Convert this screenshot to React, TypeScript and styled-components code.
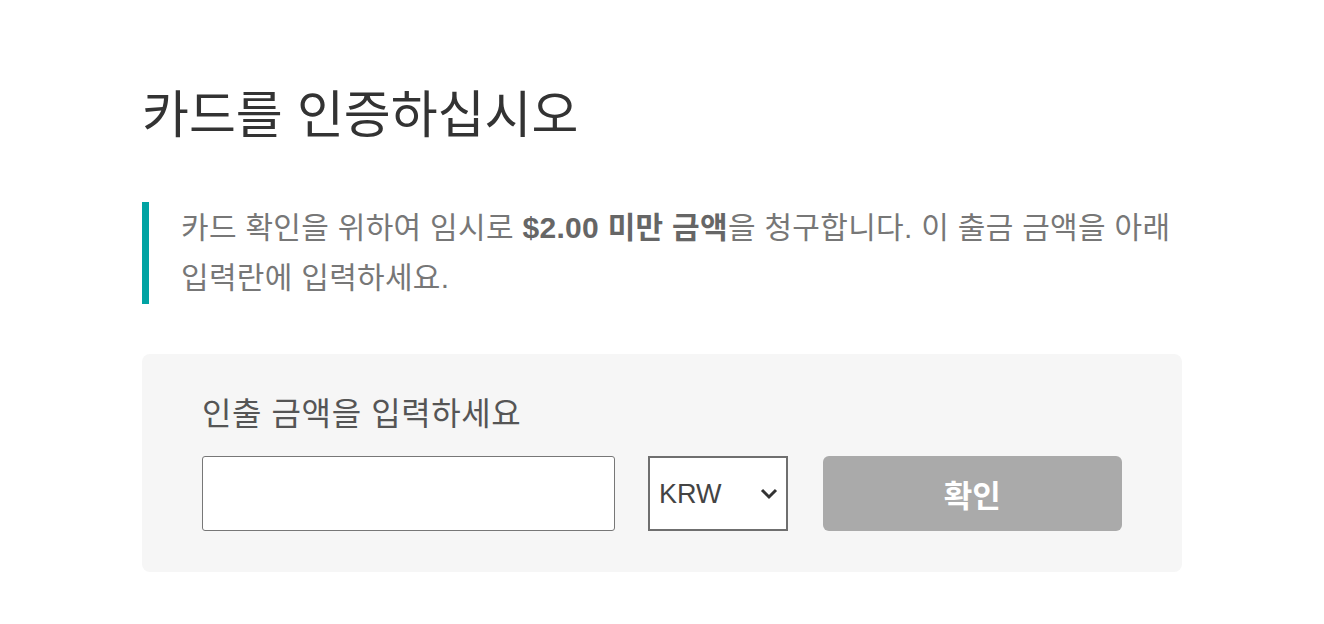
import React from 'react';
import styled, { createGlobalStyle } from 'styled-components';

const GlobalStyle = createGlobalStyle`
  body {
    margin: 0;
    background: #fff;
    font-family: 'Liberation Sans', 'Noto Sans CJK KR', sans-serif;
  }
`;

const Container = styled.div`
  max-width: 1040px;
  margin: 0 auto;
  padding-top: 80px;
`;

const Title = styled.h1`
  font-size: 51px;
  font-weight: 400;
  color: #333;
  margin: 0 0 50px;
  line-height: 72px;
`;

const Notice = styled.blockquote`
  margin: 0 0 50px;
  padding: 1px 0 1px 32px;
  border-left: 7px solid #00a3a3;
  font-size: 30px;
  letter-spacing: 0.3px;
  line-height: 50px;
  color: #777;
  word-break: keep-all;

  strong {
    color: #666;
    font-weight: 700;
  }
`;

const Panel = styled.div`
  background: #f6f6f6;
  border-radius: 8px;
  padding: 40px 60px 41px;
`;

const Label = styled.label`
  display: block;
  font-size: 32px;
  letter-spacing: 0.6px;
  color: #555;
  line-height: 40px;
  margin-bottom: 22px;
`;

const Row = styled.div`
  display: flex;
  align-items: stretch;
  height: 75px;
`;

const AmountInput = styled.input`
  box-sizing: border-box;
  width: 414px;
  border: 1px solid #777;
  border-radius: 3px;
  background: #fff;
  font-size: 26px;
  padding: 0 12px;
`;

const SelectWrap = styled.div`
  position: relative;
  margin-left: 33px;
  width: 140px;
`;

const CurrencySelect = styled.select`
  box-sizing: border-box;
  width: 100%;
  height: 100%;
  appearance: none;
  border: 2px solid #6f6f6f;
  border-radius: 0;
  background: #fff;
  font-family: 'Liberation Sans', Arial, sans-serif;
  font-size: 27px;
  color: #444;
  padding: 0 0 0 9px;
`;

const Chevron = styled.svg`
  position: absolute;
  right: 10px;
  top: 50%;
  transform: translateY(-50%);
  pointer-events: none;
`;

const SubmitButton = styled.button`
  margin-left: 35px;
  width: 300px;
  border: none;
  border-radius: 6px;
  background: #aaa;
  color: #fff;
  font-family: inherit;
  font-size: 31px;
  font-weight: 700;
`;

const App: React.FC = () => {
  return (
    <>
      <GlobalStyle />
      <Container>
        <Title>카드를 인증하십시오</Title>
        <Notice>
          카드 확인을 위하여 임시로 <strong>$2.00 미만 금액</strong>을 청구합니다. 이 출금 금액을 아래
          입력란에 입력하세요.
        </Notice>
        <Panel>
          <Label htmlFor="amount">인출 금액을 입력하세요</Label>
          <Row>
            <AmountInput id="amount" type="text" />
            <SelectWrap>
              <CurrencySelect defaultValue="KRW">
                <option value="KRW">KRW</option>
                <option value="USD">USD</option>
              </CurrencySelect>
              <Chevron width="18" height="12" viewBox="0 0 18 12">
                <path d="M2 2l7 7 7-7" fill="none" stroke="#333" strokeWidth="3" />
              </Chevron>
            </SelectWrap>
            <SubmitButton type="button">확인</SubmitButton>
          </Row>
        </Panel>
      </Container>
    </>
  );
};

export default App;
